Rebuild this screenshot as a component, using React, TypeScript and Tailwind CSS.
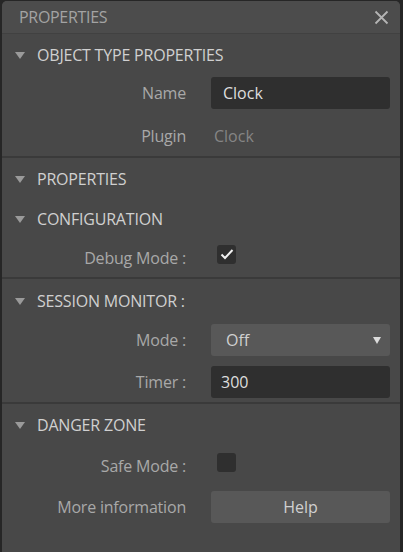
import React from "react";

const font = { fontFamily: '"Open Sans", "Noto Sans", sans-serif' };

function Caret() {
  return (
    <svg width="10" height="7" viewBox="0 0 10 7" className="shrink-0">
      <path d="M0 0 L10 0 L5 7 Z" fill="#9a9a9a" />
    </svg>
  );
}

function SectionTitle({ title }: { title: string }) {
  return (
    <div className="flex items-center h-[40px] pl-[13px] gap-[12px]">
      <Caret />
      <span className="text-[16px] text-[#d0d0d0] tracking-[-0.2px]">{title}</span>
    </div>
  );
}

function Row({ label, children }: { label: string; children: React.ReactNode }) {
  return (
    <div className="flex items-center h-[32px]">
      <div className="w-[184px] text-right text-[16px] text-[#a8a8a8] tracking-[-0.2px] shrink-0">{label}</div>
      <div className="ml-[25px] w-[179px] flex items-center">{children}</div>
    </div>
  );
}

function Checkbox({ checked }: { checked?: boolean }) {
  return (
    <div className="w-[19px] h-[19px] ml-[6px] rounded-[3px] bg-[#2f2f2f] flex items-center justify-center mb-[8px]">
      {checked && (
        <svg width="14" height="12" viewBox="0 0 14 12">
          <path d="M1.5 6.5 L5 10 L12.5 2" fill="none" stroke="#f2f2f2" strokeWidth="2" />
        </svg>
      )}
    </div>
  );
}

function Divider() {
  return <div className="h-[2px] bg-[#3a3a3a]" />;
}

export default function App() {
  return (
    <div className="w-[403px] h-[552px] bg-[#262626] pt-[1px] pl-[2px] overflow-hidden" style={font}>
      <div className="w-[398px] h-[551px] bg-[#484848] rounded-t-[5px] overflow-hidden">
        {/* Header */}
        <div className="h-[33px] bg-[#4c4c4c] border-b border-[#414141] flex items-center justify-between pl-[17px] pr-[11px]">
          <span className="text-[16px] text-[#a3a3a3] tracking-[-0.3px]">PROPERTIES</span>
          <svg width="15" height="15" viewBox="0 0 15 15">
            <path d="M1.5 1.5 L13.5 13.5 M13.5 1.5 L1.5 13.5" stroke="#b4b4b4" strokeWidth="1.8" />
          </svg>
        </div>

        {/* Object type properties */}
        <div className="pt-[1px]">
          <SectionTitle title="OBJECT TYPE PROPERTIES" />
          <div className="flex flex-col gap-[11px] pt-[2px] pb-[4px]">
            <Row label="Name">
              <div className="w-full h-[32px] bg-[#2f2f2f] rounded-[3px] flex items-center px-[12px] text-[16px] text-[#dedede]">Clock</div>
            </Row>
            <Row label="Plugin">
              <span className="pl-[3px] text-[16px] text-[#858585]">Clock</span>
            </Row>
          </div>
        </div>
        <Divider />

        {/* Properties / configuration */}
        <div className="pt-[1px]">
          <SectionTitle title="PROPERTIES" />
          <SectionTitle title="CONFIGURATION" />
          <div className="pt-[3px] pb-[3px]">
            <Row label="Debug Mode :">
              <Checkbox checked />
            </Row>
          </div>
        </div>
        <Divider />

        {/* Session monitor */}
        <div className="pt-[2px]">
          <SectionTitle title="SESSION MONITOR :" />
          <div className="flex flex-col gap-[10px] pt-[3px] pb-[4px]">
            <Row label="Mode :">
              <div className="w-full h-[32px] bg-[#585858] rounded-[3px] flex items-center justify-between pl-[15px] pr-[9px] text-[16px] text-[#d0d0d0]">
                <span>Off</span>
                <svg width="8" height="7" viewBox="0 0 8 7">
                  <path d="M0 0 L8 0 L4 7 Z" fill="#dcdcdc" />
                </svg>
              </div>
            </Row>
            <Row label="Timer :">
              <div className="w-full h-[32px] bg-[#2f2f2f] rounded-[3px] flex items-center px-[10px] text-[16px] text-[#dedede]">300</div>
            </Row>
          </div>
        </div>
        <Divider />

        {/* Danger zone */}
        <div className="pt-[1px]">
          <SectionTitle title="DANGER ZONE" />
          <div className="flex flex-col gap-[9px] pt-[5px]">
            <Row label="Safe Mode :">
              <Checkbox />
            </Row>
            <Row label="More information">
              <div className="w-full h-[32px] bg-[#585858] rounded-[3px] flex items-center justify-center text-[16px] text-[#d0d0d0]">Help</div>
            </Row>
          </div>
        </div>
      </div>
    </div>
  );
}
